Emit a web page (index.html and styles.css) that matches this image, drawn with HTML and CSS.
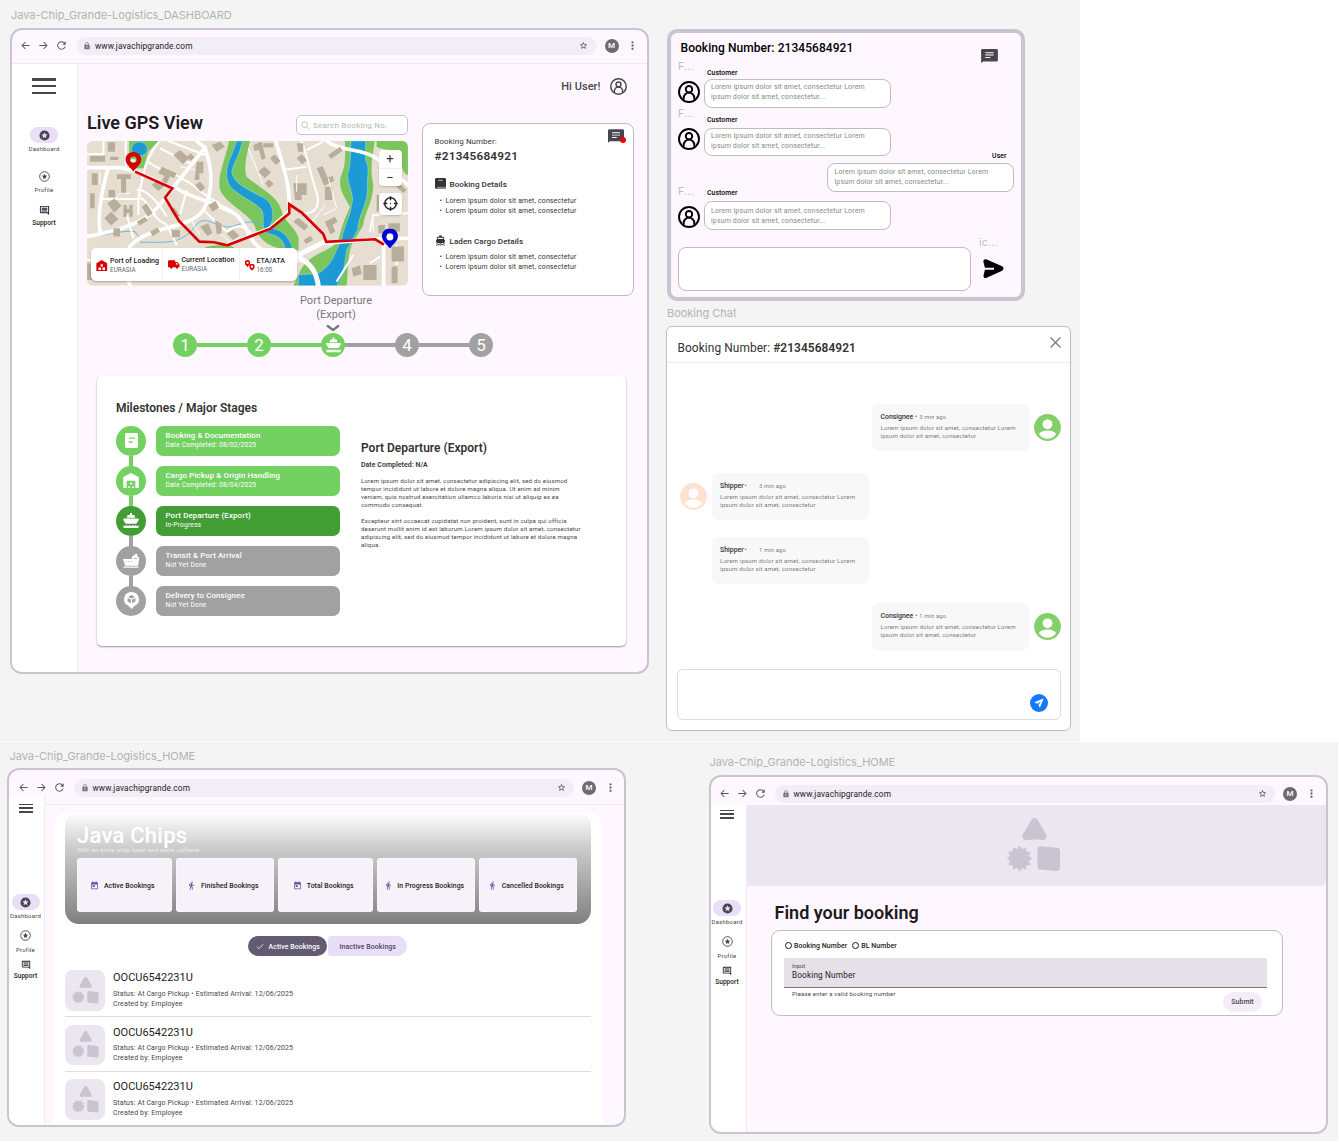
FILE: index.html
```html
<!DOCTYPE html>
<html lang="en">
<head>
<meta charset="utf-8">
<title>Java-Chip Grande Logistics</title>
<link rel="stylesheet" href="styles.css">
</head>
<body>
<svg class="defs" width="0" height="0" aria-hidden="true">
  <symbol id="back" viewBox="0 0 24 24"><path d="M21 11H6.800l5.600-5.600L11 4l-8 8 8 8 1.400-1.400L6.800 13H21z"/></symbol>
  <symbol id="fwd" viewBox="0 0 24 24"><path d="M3 11h14.200l-5.600-5.600L13 4l8 8-8 8-1.400-1.400 5.600-5.600H3z"/></symbol>
  <symbol id="reload" viewBox="0 0 24 24"><path d="M18.600 5.400A9.300 9.300 0 1 0 21 14h-2.100A7.200 7.200 0 1 1 17.100 6.900L13.800 10.200H21.200V2.800z"/></symbol>
  <symbol id="lock" viewBox="0 0 24 24"><path d="M18 8h-1V6A5 5 0 0 0 7 6v2H6a2 2 0 0 0-2 2v10a2 2 0 0 0 2 2h12a2 2 0 0 0 2-2V10a2 2 0 0 0-2-2zm-6 9a2 2 0 1 1 0-4 2 2 0 0 1 0 4zm3-9H9V6a3 3 0 0 1 6 0z"/></symbol>
  <symbol id="star" viewBox="0 0 24 24"><path d="M22 9.240l-7.190-.62L12 2 9.190 8.630 2 9.240l5.460 4.730L5.820 21 12 17.270 18.180 21l-1.630-7.030zM12 15.400l-3.760 2.270 1-4.280-3.320-2.880 4.380-.38L12 6.100l1.710 4.040 4.380.38-3.320 2.880 1 4.280z"/></symbol>
  <symbol id="dots" viewBox="0 0 24 24"><path d="M10 3h4v4h-4zM10 10h4v4h-4zM10 17h4v4h-4z"/></symbol>
  <symbol id="stars" viewBox="0 0 24 24"><path d="M12 1a11 11 0 1 0 0 22 11 11 0 0 0 0-22zm4.230 17L12 15.450 7.770 18l1.120-4.810-3.730-3.230 4.920-.42L12 5l1.920 4.530 4.920.42-3.730 3.230z"/></symbol>
  <symbol id="stars-o" viewBox="0 0 24 24"><circle cx="12" cy="12" r="10.500" fill="none" stroke="currentColor" stroke-width="2"/><path d="M15.800 17.500L12 15.200 8.200 17.500l1-4.300-3.300-2.900 4.400-.4L12 5.800l1.700 4.100 4.400.4-3.300 2.900z"/></symbol>
  <symbol id="comment" viewBox="0 0 24 24"><path d="M4 2a2 2 0 0 0-2 2v12c0 1.100.9 2 2 2h14l4 4V2zm0 2h16v13l-1.200-1H4zM6 12h12v2H6zM6 9h12v2H6zM6 6h12v2H6z"/></symbol>
  <symbol id="chat" viewBox="0 0 24 20"><path d="M2 0h20a2 2 0 0 1 2 2v14a2 2 0 0 1-2 2H3l-3 2V2a2 2 0 0 1 2-2z"/><path fill="#fff" d="M6 4.500h12v1.400H6zM6 8h12v1.400H6zM6 11.500h7v1.400H6z"/></symbol>
  <symbol id="person" viewBox="0 0 24 24"><g fill="none" stroke="currentColor" stroke-width="2.100"><circle cx="12" cy="12" r="10.900"/><circle cx="12" cy="9" r="3.500"/><path d="M6.200 20.500v-2a5.800 5.800 0 0 1 11.600 0v2"/></g></symbol>
  <symbol id="avatar" viewBox="0 0 27 27"><circle cx="13.500" cy="13.500" r="13.400"/><circle cx="13.500" cy="10.300" r="4.900" fill="#fff"/><path fill="#fff" d="M5 20.200c2-5 15-5 17 0-4 6-13 6-17 0z"/></symbol>
  <symbol id="boat" viewBox="0 0 24 24"><path d="M20 21c-1.390 0-2.780-.47-4-1.320-2.440 1.710-5.560 1.710-8 0C6.780 20.530 5.390 21 4 21H2v2h2c1.380 0 2.740-.35 4-.99 2.520 1.290 5.480 1.290 8 0 1.260.65 2.620.99 4 .99h2v-2zM3.950 19H4c1.600 0 3.020-.88 4-2 .98 1.120 2.400 2 4 2s3.020-.88 4-2c.98 1.120 2.400 2 4 2h.05l2.100-7.200L20 10.620V6a2 2 0 0 0-2-2h-3V1H9v3H6a2 2 0 0 0-2 2v4.620l-2.200 1.100zM6 6h12v2.500H6z"/></symbol>
  <symbol id="ferry" viewBox="0 0 16 16"><path d="M7 0h2v2h2.500l.8 3H3.700l.8-3H7zM1 5.800h14c1 0 1.300.8.800 1.600l-1.900 3.100c-.4.500-.8.700-1.400.7h-9c-.6 0-1-.2-1.400-.7L.2 7.400C-.3 6.600 0 5.800 1 5.800zM.3 12.500l1.500 1.300 1.500-1.300 1.600 1.300 1.500-1.300L8 13.800l1.600-1.300 1.500 1.300 1.600-1.300 1.500 1.300 1.500-1.300V15.600H.3z"/></symbol>
  <symbol id="doc" viewBox="0 0 14 16"><path d="M1.500 0h11A1.500 1.500 0 0 1 14 1.500v13a1.500 1.500 0 0 1-1.500 1.500h-11A1.500 1.500 0 0 1 0 14.500v-13A1.500 1.500 0 0 1 1.500 0zM4 4.700v1.400h6.500V4.700zM4 8.900v1.400h4.200V8.900z" fill-rule="evenodd"/></symbol>
  <symbol id="depot" viewBox="0 0 16 16"><path d="M8 0l8 4v12h-3.500V8h-9v8H0V4z"/><path d="M6.800 10h2.400v1.700H6.800zM5.200 13.800h1.700v1.700H5.200zM9.100 13.800h1.700v1.700H9.100z"/></symbol>
  <symbol id="cargo" viewBox="0 0 18 16"><path d="M0 6h10V3.500l2-1.300V1.500l3-1.500h1v3l2 1v2.500L17 13.500H2.500zM.5 14.500h17V16H.5z"/><path class="hole" d="M3 8.500h1.200v1H3zM6 8.500h1.200v1H6zM9 8.500h1.200v1H9zM12 5h4v.8h-4z"/></symbol>
  <symbol id="parcel" viewBox="0 0 16 18"><path d="M8 0a8 7.700 0 0 1 3 14.800L8 18l-3-3.200A8 7.700 0 0 1 8 0z"/><g class="hole"><path d="M8 3.200l3.600 1.900L8 7 4.400 5.100zM3.800 6.200L7.400 8v4l-3.600-2zM12.200 6.200L8.600 8v4l3.600-2z"/></g></symbol>
  <symbol id="pin" viewBox="0 0 16 20"><path fill-rule="evenodd" d="M8 0c4.800 0 8 3.500 8 7.700 0 4.600-4.800 7.800-8 12.300C4.800 15.500 0 12.300 0 7.700 0 3.500 3.200 0 8 0zm0 4.700a3.300 3.300 0 1 0 0 6.600 3.300 3.300 0 0 0 0-6.600z"/></symbol>
  <symbol id="walk" viewBox="0 0 24 24"><path d="M13.500 5.500a2 2 0 1 0 0-4 2 2 0 0 0 0 4zM9.800 8.900L7 23h2.100l1.800-8 2.100 2v6h2v-7.500l-2.100-2 .6-3A7.300 7.300 0 0 0 19 13v-2a5 5 0 0 1-4.300-2.400l-1-1.600c-.6-1-1.700-1.300-2.500-.8L6 8.300V13h2V9.600z"/></symbol>
  <symbol id="cal" viewBox="0 0 24 24"><path fill-rule="evenodd" d="M19 3h-1V1h-3v2H9V1H6v2H5a2 2 0 0 0-2 2v15a2 2 0 0 0 2 2h14a2 2 0 0 0 2-2V5a2 2 0 0 0-2-2zm0 17H5V9h14zM7 11h6v5H7z"/></symbol>
  <symbol id="shapes" viewBox="0 0 54 54"><path d="M24.500 1.600c1.500-2.200 4.500-2.200 6 0l8.500 15c1.600 3-.8 5.600-3.600 5.600-2.700-.9-13-.9-15.500 0-3.400.2-5.600-2.800-4-5.600z"/><path stroke="currentColor" stroke-width=".6" stroke-linejoin="round" transform="translate(12.500 40.500)" d="M12.500 0L9.080 2.430 10.800 6.250 6.650 6.650 6.250 10.800 2.430 9.080 0 12.500-2.430 9.080-6.250 10.800-6.650 6.650-10.800 6.250-9.080 2.430-12.500 0-9.080-2.430-10.800-6.250-6.650-6.650-6.250-10.800-2.430-9.080 0-12.500 2.430-9.080 6.250-10.800 6.650-6.650 10.800-6.250 9.080-2.430z"/><path d="M34 28.200l16 1.600c2 .2 3 1.300 3 3v17c0 2.400-1.400 3.500-3.300 3.300l-16.500-1.600c-1.900-.2-2.700-1.300-2.700-3.200V31.500c0-2.300 1.300-3.500 3.500-3.300z"/></symbol>
</svg>

<main class="canvas">
<div class="band band-top"></div>
<div class="band band-bottom"></div>

<!-- Dashboard -->
<section class="frame dash">
  <h2 class="frame-name">Java-Chip_Grande-Logistics_DASHBOARD</h2>
  <div class="window">
    <header class="toolbar"><svg class="ti"><use href="#back"/></svg><svg class="ti"><use href="#fwd"/></svg><svg class="ti"><use href="#reload"/></svg><div class="url"><svg><use href="#lock"/></svg><span>www.javachipgrande.com</span><svg class="fav"><use href="#star"/></svg></div><b class="me">M</b><svg class="ti"><use href="#dots"/></svg></header>
    <div class="body">
      <nav class="rail">
        <div class="burger"><i></i><i></i><i></i></div>
        <a class="item on"><span><svg><use href="#stars"/></svg></span>Dashboard</a>
        <a class="item"><span><svg><use href="#stars-o"/></svg></span>Profile</a>
        <a class="item sup"><span><svg><use href="#comment"/></svg></span>Support</a>
      </nav>
      <div class="page">
        <div class="hello"><span>Hi User!</span><svg><use href="#person"/></svg></div>
        <div class="top">
          <div class="gps">
            <div class="gps-head"><h1>Live GPS View</h1><div class="search"><svg viewBox="0 0 10 10"><circle cx="4" cy="4" r="3.200"/><path d="M6.300 6.300L9.500 9.500"/></svg><span>Search Booking No.</span></div></div>
            <div class="map">
              <svg class="terrain" viewBox="21 18 963 434">
                <rect x="21" y="18" width="963" height="434" fill="#e6dfd1"/>
                <g fill="#7bc65c">
                  <path d="M147 18H235L205 50 190 100 147 100z"/>
                  <path d="M447 18H510C500 60 490 100 500 125C545 165 590 180 604 225C612 260 650 280 656 310V345H620C580 340 535 320 525 275C510 235 440 210 420 165C410 120 438 70 447 18z"/>
                  <path d="M795 18H884C880 60 868 90 880 150C880 200 855 230 850 270L815 330C800 370 805 420 800 452H640L665 400C700 350 740 355 775 320C785 270 800 240 810 215C790 180 775 160 782 125C800 90 795 50 795 18z"/>
                  <path d="M890 18H984V120C960 115 970 75 955 55C930 40 905 45 890 35z"/>
                  <path d="M375 337C420 325 460 330 470 345H385z"/>
                </g>
                <g fill="#1b9ad6" stroke="#a8dcf0" stroke-width="1.500">
                  <ellipse cx="178" cy="42" rx="24" ry="21"/>
                  <path d="M470 18H487C480 60 462 80 455 110C460 145 500 160 530 178C555 190 578 200 578 235C580 260 570 270 567 280C600 280 625 300 638 340H615C610 300 570 300 553 290C545 260 555 245 545 225C530 205 490 190 455 160C430 130 440 90 455 60z"/>
                  <path d="M813 18H857V75C870 100 862 120 862 150C868 200 835 240 833 285L800 345C792 400 790 430 770 452H655V420C690 415 715 425 735 400C760 380 765 350 785 315C790 280 812 240 815 210C825 180 805 160 803 120C812 95 812 55 813 18z"/>
                </g>
                <path d="M21 305C90 300 130 285 165 290L175 305M180 322C240 320 280 330 320 300C350 280 345 255 380 257C420 270 440 285 470 270C500 260 530 255 545 275" fill="none" stroke="#69b8d8" stroke-width="3"/>
                <g fill="none" stroke="#fff" stroke-width="11" stroke-linecap="round" stroke-linejoin="round">
                  <path d="M21 98H120L165 108 275 158"/><path d="M84 100C70 150 50 230 60 290"/><path d="M21 305C100 290 200 270 250 195L375 38 350 18"/>
                  <path d="M375 38C400 110 400 170 370 225C330 280 240 270 180 310C140 330 120 370 150 452"/>
                  <path d="M290 160C350 200 420 200 470 240C510 280 505 330 560 350L650 380"/>
                  <path d="M588 18C600 70 630 140 628 210M628 230L570 280 440 330"/><path d="M735 320L655 360 620 400M660 370C700 390 710 420 715 452" stroke-width="15"/>
                  <path d="M740 18C780 50 850 40 890 70L940 110 984 150"/><path d="M740 325L890 312 984 310M911 325V452"/>
                </g>
                <g fill="none" stroke="#fff" stroke-width="6" stroke-linejoin="round">
                  <path d="M21 58H70V18M137 18V100M240 18C200 60 190 110 175 190C210 190 200 240 260 270M66 192H175V240M170 165C200 160 240 210 260 245M205 80C240 110 280 110 305 130M240 40L340 90M265 18L375 60M300 130C340 140 360 180 420 205M320 165L300 240M370 225L440 290C480 260 500 280 520 300M400 210L480 245M140 240L160 310M260 270L290 330M665 18C680 60 690 110 712 180C720 220 700 240 660 235M610 105L680 95M680 45L730 20M870 290L880 240 984 235M21 375H100M870 385L900 365M950 330V390M770 440L820 360"/>
                </g>
                <g fill="#b9ae9b">
                  <path d="M30 62h45v18H30zM90 65h25v10H90zM83 22h22v28H83zM35 115h18v35H35zM110 118h42v14h-14v45h-15v-45h-13zM85 165h20v22H85zM30 175h14v45H30zM82 205l22-15 20 22-22 22zM130 210h10v12h8v-12h10v35h-10v-12h-8v12h-10zM73 250l20-20 22 22-22 20zM100 280h20v25h-20z"/>
                  <path d="M185 215l15-10 18 30-15 10zM215 150l18-15 20 18-18 15zM170 260l25-15 8 12-25 15zM245 95l45 20-8 14-12-5-10 22-15-8 8-15-18-8zM280 60l20-15 28 25-20 18zM350 80h20v35h-12v20h-14zM320 65l12-10 12 12-12 10zM270 225l12-8 18 25-12 8zM345 150l15-10 16 18-15 12zM275 285h25v22h-25zM210 290l22-12 8 12-22 14z"/>
                  <path d="M395 30l25-10 15 15-25 15zM360 275l25-10 12 30-15 8zM385 210l22-12 10 20-20 12zM405 255l20 12v30h-15zM440 295l20-10 18 18-20 12z"/>
                  <path d="M520 30l25-10 12 50-12 5-8-30-15 3zM535 110l18-16 20 18-18 18zM555 145l12-12 14 14-14 12zM570 70l14-12 18 20-15 12zM550 25h30v12h-30zM640 145h40v35h-15v15h-20zM640 260l15-12 30 25-12 14zM670 315l22-12 8 12-22 12zM650 70l15-12 16 18-15 12zM710 100l18-7 15 35 15-6 5 15-30 15zM735 155h22v40h-22zM735 260l30-15 8 15-15 10 8 20-15 8zM745 60l35-25 8 12-35 25zM650 25h20v25h-15z"/>
                  <path d="M895 270h20v25h-20zM925 265h35v25h-35zM935 335h37v45h-37zM850 390h40v45h-40zM815 400l25-8 5 25-25 8zM935 395h18v50h-18zM890 180h15v50h-15zM960 145l20 20-10 10-20-18zM21 385h15v50H21z"/>
                </g>
                <g fill="none" stroke="#fff" stroke-width="3"><path d="M60 110V150M105 195L120 175H150M180 180L230 240M300 95L345 105M505 40L550 150M650 120V170M690 270L735 210M880 295V260M730 240L770 220 745 130M330 250L360 300M420 295L450 320"/></g>
                <path d="M165 110L277 160 255 188 297 258 358 320 402 322 442 331 572 281 628 235V208L665 233 730 297 739 321 886 313 912 329" fill="none" stroke="#d80000" stroke-width="8"/>
                <use href="#pin" x="135" y="51" width="50" height="59" fill="#d80000"/>
                <ellipse cx="159" cy="76" rx="8" ry="5" fill="#fff"/>
                <use href="#pin" x="905" y="281" width="50" height="60" fill="#0300d8"/>
                <circle cx="930" cy="307" r="10" fill="#fff"/>
              </svg>
              <div class="zoomer"><span>+</span><span>−</span></div>
              <div class="locate"><svg viewBox="0 0 16 16"><circle cx="8" cy="8" r="6.200"/><path d="M8 .3V4.500M8 11.500V15.700M.3 8H4.500M11.500 8H15.700M7.500 8h1"/></svg></div>
              <div class="legend">
                <div><svg viewBox="0 0 16 16"><path fill-rule="evenodd" d="M8 0l7.500 4.500V16H.5V4.500zM6.500 6v3h3V6zM3.500 10.500v3.500H7v-3.500zm5.500 0v3.500h3.500v-3.500z"/></svg><p><b>Port of Loading</b>EURASIA</p></div>
                <div><svg viewBox="0 0 16 16"><path fill-rule="evenodd" d="M1 3h9v2.500h3L16 9v4h-1.500a2 2 0 0 1-4 0h-4a2 2 0 0 1-4 0H0V4zM11 7v2h3.200L12.500 7z"/></svg><p><b>Current Location</b>EURASIA</p></div>
                <div><svg viewBox="0 0 16 18"><use href="#pin" width="9" height="11"/><use href="#pin" x="7" y="6" width="9" height="11"/></svg><p><b>ETA/ATA</b>16:00</p></div>
              </div>
            </div>
          </div>
          <aside class="booking">
            <div class="unread"><svg><use href="#chat"/></svg><i></i></div>
            <p class="bn">Booking Number:</p>
            <p class="num">#21345684921</p>
            <h3><svg viewBox="0 0 12 12"><path d="M1.500 0h9A1.500 1.500 0 0 1 12 1.500V12H1.800A1.800 1.800 0 0 1 0 10.200V1.500A1.500 1.500 0 0 1 1.500 0z"/><path fill="#888" d="M2 9.500h10V12H2z"/><path fill="#999" d="M3.500 2h5v1.400h-5z"/></svg>Booking Details</h3>
            <ul><li>Lorem ipsum dolor sit amet, consectetur</li><li>Lorem ipsum dolor sit amet, consectetur</li></ul>
            <h3 class="laden"><svg><use href="#boat"/></svg>Laden Cargo Details</h3>
            <ul><li>Lorem ipsum dolor sit amet, consectetur</li><li>Lorem ipsum dolor sit amet, consectetur</li></ul>
          </aside>
        </div>
        <div class="progress">
          <p>Port Departure<br>(Export)</p>
          <svg class="chev" viewBox="0 0 14 8"><path d="M1 1.500L7 6l6-4.500"/></svg>
          <div class="steps"><b>1</b><i></i><b>2</b><i></i><b><svg><use href="#ferry"/></svg></b><i class="off"></i><b class="off">4</b><i class="off"></i><b class="off">5</b></div>
        </div>
        <div class="card">
          <div class="stages">
            <h3>Milestones / Major Stages</h3>
            <div class="stage-grid">
              <div class="line"><b><svg class="i-doc"><use href="#doc"/></svg></b><i></i><b><svg><use href="#depot"/></svg></b><i></i><b class="now"><svg><use href="#ferry"/></svg></b><i class="off"></i><b class="off"><svg><use href="#cargo"/></svg></b><i class="off"></i><b class="off"><svg class="i-parcel"><use href="#parcel"/></svg></b></div>
              <div class="boxes">
                <div><b>Booking &amp; Documentation</b>Date Completed: 08/02/2025</div>
                <div><b>Cargo Pickup &amp; Origin Handling</b>Date Completed: 08/04/2025</div>
                <div class="now"><b>Port Departure (Export)</b>In-Progress</div>
                <div class="off"><b>Transit &amp; Port Arrival</b>Not Yet Done</div>
                <div class="off"><b>Delivery to Consignee</b>Not Yet Done</div>
              </div>
            </div>
          </div>
          <div class="detail">
            <h3>Port Departure (Export)</h3>
            <h4>Date Completed: N/A</h4>
            <p>Lorem ipsum dolor sit amet, consectetur adipiscing elit, sed do eiusmod<br>tempor incididunt ut labore et dolore magna aliqua. Ut enim ad minim<br>veniam, quis nostrud exercitation ullamco laboris nisi ut aliquip ex ea<br>commodo consequat.</p>
            <p>Excepteur sint occaecat cupidatat non proident, sunt in culpa qui officia<br>deserunt mollit anim id est laborum.Lorem ipsum dolor sit amet, consectetur<br>adipiscing elit, sed do eiusmod tempor incididunt ut labore et dolore magna<br>aliqua.</p>
          </div>
        </div>
      </div>
    </div>
  </div>
</section>

<!-- Support chat -->
<section class="frame support">
  <div class="sup-head"><h2>Booking Number: 21345684921</h2><svg><use href="#chat"/></svg></div>
  <div class="msg m1"><div class="who"><span>F...</span><svg><use href="#person"/></svg></div><div class="say"><b>Customer</b><p>Lorem ipsum dolor sit amet, consectetur Lorem<br>ipsum dolor sit amet, consectetur...</p></div></div>
  <div class="msg m2"><div class="who"><span>F...</span><svg><use href="#person"/></svg></div><div class="say"><b>Customer</b><p>Lorem ipsum dolor sit amet, consectetur Lorem<br>ipsum dolor sit amet, consectetur...</p></div></div>
  <div class="msg mine"><div class="say"><b>User</b><p>Lorem ipsum dolor sit amet, consectetur Lorem<br>ipsum dolor sit amet, consectetur...</p></div></div>
  <div class="msg m3"><div class="who"><span>F...</span><svg><use href="#person"/></svg></div><div class="say"><b>Customer</b><p>Lorem ipsum dolor sit amet, consectetur Lorem<br>ipsum dolor sit amet, consectetur...</p></div></div>
  <div class="compose"><div class="field"></div><div class="send"><span>ic...</span><svg viewBox="0 0 22 20"><path d="M3.300.4L19.500 7.500c2.600 1.200 2.600 3.800 0 5L3.800 19.700C1.800 20.600.2 19.200.6 17.200L2 11.200h9.500V9.300H2L.5 3.200C0 1.200 1.500-.3 3.300.4z"/></svg></div></div>
</section>

<!-- Booking chat -->
<section class="frame chatbox">
  <h2 class="frame-name">Booking Chat</h2>
  <div class="chat-window">
    <header><h2>Booking Number: <b>#21345684921</b></h2><svg viewBox="0 0 10 10"><path d="M.5.5l9 9M9.500.5l-9 9"/></svg></header>
    <div class="cm right c1"><div><p class="by"><b>Consignee</b> <em>•</em> 3 min ago</p><p>Lorem ipsum dolor sit amet, consectetur Lorem<br>ipsum dolor sit amet, consectetur</p></div><svg><use href="#avatar"/></svg></div>
    <div class="cm c2"><svg><use href="#avatar"/></svg><div><p class="by"><b>Shipper</b><em class="dot">•</em>3 min ago</p><p>Lorem ipsum dolor sit amet, consectetur Lorem<br>ipsum dolor sit amet, consectetur</p></div></div>
    <div class="cm c3"><div><p class="by"><b>Shipper</b><em class="dot">•</em>1 min ago</p><p>Lorem ipsum dolor sit amet, consectetur Lorem<br>ipsum dolor sit amet, consectetur</p></div></div>
    <div class="cm right c4"><div><p class="by"><b>Consignee</b> <em>•</em> 1 min ago</p><p>Lorem ipsum dolor sit amet, consectetur Lorem<br>ipsum dolor sit amet, consectetur</p></div><svg><use href="#avatar"/></svg></div>
    <div class="reply"><svg viewBox="0 0 18 18"><circle cx="9" cy="9" r="9" fill="#1677ff"/><path fill="#fff" d="M13.600 4.500L4.300 8.300l3 1.500 3.700-2.600-2.600 3.700 1.500 2.900z"/></svg></div>
  </div>
</section>

<!-- Booking list -->
<section class="frame home">
  <h2 class="frame-name">Java-Chip_Grande-Logistics_HOME</h2>
  <div class="window">
    <header class="toolbar"><svg class="ti"><use href="#back"/></svg><svg class="ti"><use href="#fwd"/></svg><svg class="ti"><use href="#reload"/></svg><div class="url"><svg><use href="#lock"/></svg><span>www.javachipgrande.com</span><svg class="fav"><use href="#star"/></svg></div><b class="me">M</b><svg class="ti"><use href="#dots"/></svg></header>
    <div class="body">
      <nav class="rail slim">
        <div class="burger"><i></i><i></i><i></i></div>
        <a class="item on"><span><svg><use href="#stars"/></svg></span>Dashboard</a>
        <a class="item"><span><svg><use href="#stars-o"/></svg></span>Profile</a>
        <a class="item sup"><span><svg><use href="#comment"/></svg></span>Support</a>
      </nav>
      <div class="panel">
        <div class="hero">
          <h1>Java Chips</h1>
          <p>With an extra whip foam and extra caffeine</p>
          <div class="tiles">
            <div><svg><use href="#cal"/></svg>Active Bookings</div>
            <div><svg><use href="#walk"/></svg>Finished Bookings</div>
            <div><svg><use href="#cal"/></svg>Total Bookings</div>
            <div><svg><use href="#walk"/></svg>In Progress Bookings</div>
            <div><svg><use href="#walk"/></svg>Cancelled Bookings</div>
          </div>
        </div>
        <div class="tabs"><span class="sel"><svg viewBox="0 0 10 8"><path d="M1 4.200l2.500 2.500L9 1.200"/></svg>Active Bookings</span><span>Inactive Bookings</span></div>
        <ul class="list">
          <li><div class="thumb"><svg><use href="#shapes"/></svg></div><div><h3>OOCU6542231U</h3><p>Status: At Cargo Pickup • Estimated Arrival: 12/06/2025<br>Created by: Employee</p></div></li>
          <li><div class="thumb"><svg><use href="#shapes"/></svg></div><div><h3>OOCU6542231U</h3><p>Status: At Cargo Pickup • Estimated Arrival: 12/06/2025<br>Created by: Employee</p></div></li>
          <li><div class="thumb"><svg><use href="#shapes"/></svg></div><div><h3>OOCU6542231U</h3><p>Status: At Cargo Pickup • Estimated Arrival: 12/06/2025<br>Created by: Employee</p></div></li>
        </ul>
      </div>
    </div>
  </div>
</section>

<!-- Find a booking -->
<section class="frame find">
  <h2 class="frame-name">Java-Chip_Grande-Logistics_HOME</h2>
  <div class="window">
    <header class="toolbar"><svg class="ti"><use href="#back"/></svg><svg class="ti"><use href="#fwd"/></svg><svg class="ti"><use href="#reload"/></svg><div class="url"><svg><use href="#lock"/></svg><span>www.javachipgrande.com</span><svg class="fav"><use href="#star"/></svg></div><b class="me">M</b><svg class="ti"><use href="#dots"/></svg></header>
    <div class="body">
      <nav class="rail slim">
        <div class="burger"><i></i><i></i><i></i></div>
        <a class="item on"><span><svg><use href="#stars"/></svg></span>Dashboard</a>
        <a class="item"><span><svg><use href="#stars-o"/></svg></span>Profile</a>
        <a class="item sup"><span><svg><use href="#comment"/></svg></span>Support</a>
      </nav>
      <div class="finder">
        <div class="banner"><svg><use href="#shapes"/></svg></div>
        <h1>Find your booking</h1>
        <div class="form">
          <div class="radios"><i></i><span>Booking Number</span><i></i><span>BL Number</span></div>
          <div class="input"><small>Input</small><span>Booking Number</span></div>
          <div class="foot"><p>Please enter a valid booking number</p><span class="submit">Submit</span></div>
        </div>
      </div>
    </div>
  </div>
</section>
</main>
</body>
</html>
```
FILE: styles.css
```css
* { box-sizing: border-box; margin: 0; padding: 0; }
body { background: #fff; font-family: Roboto, sans-serif; color: #1d1b20; }
h1, h2, h3, h4, b { font-weight: 500; }
ul { list-style: none; }
svg { fill: currentColor; flex: none; display: block; }
i { font-style: normal; display: block; }
.defs { position: absolute; }
p, h1, h2, h3, h4, span, b { white-space: nowrap; }

/* canvas and frames */
.canvas { position: relative; width: 1339px; height: 1142px; overflow: hidden; }
.band { background: #f4f4f4; }
.band-top { width: 1080px; height: 741px; }
.band-bottom { width: 1338px; height: 399px; margin-top: 1px; }
.frame { position: absolute; }
.frame-name { font: 400 11px/14px Inter, sans-serif; color: #b3b3b3; height: 20px; padding-left: 1px; letter-spacing: -.02px; }
.dash { left: 10px; top: 8px; width: 639px; }
.home { left: 7px; top: 749px; width: 619px; }
.find { left: 708.500px; top: 755px; width: 619px; }
.window { border: 2px solid #cac4d0; border-radius: 12px; background: #fef7ff; overflow: hidden; display: flex; flex-direction: column; }
.dash .window { height: 646px; }
.home .window, .find .window { height: 359px; }
.home .frame-name { height: 19px; padding-left: 2.500px; }

/* browser toolbar */
.toolbar { display: flex; align-items: center; height: 34px; flex: none; padding: 0 9px 2px 8px; border-bottom: 1px solid #efe8f2; color: #5b5761; }
.ti { width: 11px; height: 11px; margin-right: 7px; }
.ti:last-child { margin-right: 0; }
.url { flex: 1; height: 18px; margin-left: 2px; border-radius: 9px; background: #f3edf7; display: flex; align-items: center; padding: 0 8.500px 0 7px; font-size: 8.300px; letter-spacing: .12px; color: #1d1b20; }
.url svg { width: 8px; height: 8px; color: #79747e; margin-right: 4px; }
.url .fav { width: 9px; height: 9px; margin: 0 0 0 auto; color: #49454f; }
.me { width: 14px; height: 14px; border-radius: 7px; background: #6f6a72; color: #fff; font-size: 8px; line-height: 14px; text-align: center; margin: 0 8.500px 0 8px; }
.home .toolbar { padding: 1px 8.500px 0 8.500px; height: 35px; }
.body { flex: 1; display: flex; min-height: 0; }

/* navigation rail */
.rail { width: 66px; background: #fff; border-right: 1px solid #f1eaf4; display: flex; flex-direction: column; align-items: center; padding: 14px 1px 0 0; flex: none; color: #49454f; }
.burger { width: 24px; height: 16px; display: flex; flex-direction: column; justify-content: space-between; margin-bottom: 33px; }
.burger i { height: 2.500px; background: #49454f; }
.item { display: flex; flex-direction: column; align-items: center; font-size: 6px; line-height: 8px; letter-spacing: .22px; height: 41px; }
.item span { width: 28px; height: 16px; border-radius: 8px; display: flex; align-items: center; justify-content: center; margin-bottom: 2px; }
.item.on span { background: #e8def8; }
.item svg { width: 11px; height: 11px; }
.item.sup { color: #1d1b20; font-weight: 500; font-size: 6.500px; letter-spacing: .05px; margin-top: -6.500px; }
.item.sup span { margin-bottom: 0; }
.slim { width: 36px; padding: 7.500px 2px 0 0; margin-top: -9px; position: relative; }
.slim .burger { width: 14px; height: 9px; margin-bottom: 81.500px; }
.slim .burger i { height: 1.500px; }
.slim .item { height: 33.500px; }
.slim .item.sup { margin-top: -3px; }
.slim .item.sup svg { width: 10px; height: 10px; }
.slim .item.sup span { height: 14px; }

/* dashboard */
.page { flex: 1; min-width: 0; }
.hello { height: 44px; display: flex; justify-content: flex-end; align-items: center; padding-right: 20px; gap: 9.500px; font-size: 11px; font-weight: 500; color: #49454f; letter-spacing: .05px; }
.hello svg { width: 17px; height: 17px; }
.top { display: flex; padding-left: 9px; height: 185.500px; }
.gps { width: 321px; }
.gps-head { height: 33px; padding-top: 7px; display: flex; justify-content: space-between; }
.gps-head h1 { font-size: 18px; line-height: 16px; font-weight: 600; }
.search { width: 112px; height: 20px; border: 1px solid #c4c4c4; border-radius: 5px; background: #fff; display: flex; align-items: center; padding-left: 4px; gap: 3px; font-size: 8px; color: #b5b5b5; letter-spacing: .25px; }
.search svg { width: 9px; height: 9px; fill: none; stroke: #aaa; stroke-width: .8; }
.map { position: relative; height: 144.600px; border-radius: 6px; overflow: hidden; }
.terrain { width: 321px; height: 144.600px; }
.zoomer, .locate { position: absolute; left: 291.500px; width: 23px; background: #fff; border-radius: 4px; box-shadow: 0 1px 2px #0003; }
.zoomer { top: 8.500px; height: 36px; font-size: 13px; line-height: 17px; text-align: center; color: #333; }
.zoomer span { display: block; height: 18px; }
.zoomer span + span { border-top: 1px solid #f3edf7; }
.locate { top: 51.500px; height: 22px; padding: 3.500px 4px; }
.locate svg { width: 15px; height: 15px; fill: none; stroke: #222; stroke-width: 1.500; }
.legend { position: absolute; left: 4px; top: 107px; width: 206px; height: 33px; border-radius: 5px; background: #fff; box-shadow: 0 1px 2px #0004; display: flex; font-size: 6.300px; line-height: 8px; color: #666; letter-spacing: .05px; }
.legend > div { display: flex; align-items: center; gap: 2.500px; padding: 2px 0 0 5px; border-right: 1px solid #f1f1f1; width: 72px; }
.legend > div + div { width: 77px; padding: 0 0 1px 5px; gap: 2px; }
.legend > div:last-child { width: 57px; border: 0; padding: 2px 0 0 4px; gap: 1px; }
.legend svg { width: 11.500px; height: 11.500px; color: #d80000; }
.legend b { display: block; font-size: 7px; line-height: 9px; color: #1d1b20; letter-spacing: .04px; }
.booking { position: relative; margin: 14.500px 0 0 14px; width: 212px; height: 173px; border: 1.500px solid #bdbdbd; border-radius: 8px; background: #fff; padding: 12px 0 0 11.500px; color: #333; }
.unread { position: absolute; left: 185px; top: 5px; color: #49454f; }
.unread svg { width: 16px; height: 14px; }
.unread i { position: absolute; left: 12px; top: 8.500px; width: 6px; height: 6px; border-radius: 3px; background: #f00000; }
.bn { font-size: 7.900px; line-height: 12px; letter-spacing: .1px; }
.num { font-size: 11.800px; line-height: 17px; font-weight: 600; letter-spacing: .2px; }
.booking h3 { display: flex; align-items: center; gap: 4px; font-size: 8.100px; line-height: 12px; margin-top: 13px; height: 12px; letter-spacing: .05px; }
.booking h3 svg { width: 11px; height: 11px; }
.booking h3.laden { margin-top: 19px; }
.booking ul { padding: 6px 0 0 5px; font-size: 6.900px; line-height: 10px; letter-spacing: .18px; }
.booking .laden + ul { padding-top: 5px; }
.booking li::before { content: "•"; margin-right: 3.500px; font-size: 7px; }
.progress { display: flex; flex-direction: column; align-items: center; width: 510px; color: #777; }
.progress p { font-size: 11px; line-height: 14px; text-align: center; padding-left: 6px; letter-spacing: .02px; }
.chev { width: 14px; height: 8px; margin: 2px 0 1.500px; fill: none; stroke: #777; stroke-width: 2.200; }
.steps { display: flex; align-items: center; }
.steps b { width: 24px; height: 24px; border-radius: 12px; background: #72d160; color: #fff; font-size: 17px; font-weight: 400; line-height: 24px; text-align: center; display: flex; justify-content: center; align-items: center; }
.steps i { width: 50px; height: 4px; background: #72d160; }
.steps svg { width: 15px; height: 16px; }
.steps .off, .line .off, .boxes .off { background: #a1a1a1; }
.card { width: 529px; height: 270.500px; margin: 18.500px 0 0 18.500px; border-radius: 5px; background: #fff; box-shadow: 0 1px 2px #0006; display: flex; padding: 24px 0 0 19.500px; color: #333; }
.card h3 { font-size: 12px; line-height: 16px; font-weight: 600; }
.stages { width: 245px; }
.stage-grid { display: flex; gap: 10px; padding-top: 10px; }
.line { display: flex; flex-direction: column; align-items: center; }
.line b { width: 30px; height: 30px; border-radius: 15px; background: #72d160; color: #fff; display: flex; align-items: center; justify-content: center; }
.line i { width: 4.500px; height: 10px; background: #72d160; }
.line svg { width: 16px; height: 15.500px; }
.line .i-doc { width: 13px; height: 15px; }
.line .i-parcel { width: 15px; height: 17px; }
.line .now, .boxes .now { background: #439d35; }
.hole { fill: #a1a1a1; }
.boxes { display: flex; flex-direction: column; gap: 10px; }
.boxes div { width: 184px; height: 30px; border-radius: 7px; background: #72d160; color: #fff; padding: 4.500px 0 0 9.500px; font-size: 6.600px; line-height: 9px; letter-spacing: .2px; }
.boxes b { display: block; font-size: 7.900px; line-height: 11px; letter-spacing: .13px; }
.detail { padding-top: 40px; }
.detail h4 { font-size: 6.900px; font-weight: 600; line-height: 9px; margin: 5px 0 7.500px; letter-spacing: .08px; }
.detail p { font-size: 6.100px; line-height: 8px; margin-bottom: 8px; letter-spacing: .17px; color: #49454f; }

/* support chat */
.support { left: 667px; top: 29px; width: 357.500px; height: 272px; border: 4px solid #cac4d0; border-radius: 10px; background: #fef7ff; padding: 0 7px; }
.sup-head { display: flex; justify-content: space-between; height: 27px; padding: 6.500px 15.500px 0 2.500px; color: #000; }
.sup-head h2 { font-size: 12px; line-height: 17px; letter-spacing: .06px; }
.sup-head svg { width: 17px; height: 14px; margin-top: 9px; color: #49454f; }
.msg { display: flex; gap: 5px; color: #000; height: 47px; }
.who { width: 21px; }
.who span, .send span { font: 400 10.500px/13px Inter, sans-serif; color: #c0bcc3; display: block; height: 20.500px; letter-spacing: .3px; }
.who svg { width: 22px; height: 22px; }
.say { padding-top: 9px; }
.say b { display: block; font-size: 6.800px; line-height: 9px; padding-left: 3px; letter-spacing: .1px; }
.say p { width: 187px; height: 28.500px; margin-top: 1px; border: 1.500px solid #bdbdbd; border-radius: 8px; background: #fff; font-size: 7px; line-height: 10px; letter-spacing: .14px; color: #8a878c; padding: 2px 0 0 6px; }
.m2 p { margin-top: 2.500px; padding-top: 2.500px; }
.mine { height: 31px; margin-top: -2px; justify-content: flex-end; }
.mine .say { padding-top: 0; }
.mine b { text-align: right; padding-right: 7px; }
.mine p { margin-top: 2px; padding: 3px 0 0 7px; }
.m3 { margin-top: 2px; }
.m3 .say { padding-top: 4px; }
.m3 p { margin-top: 3px; padding-top: 3.500px; }
.compose { display: flex; padding-top: 2px; }
.field { width: 293px; height: 44px; border: 1.500px solid #bdbdbd; border-radius: 8px; background: #fff; margin-top: 12.500px; }
.send { padding: 2px 0 0 8px; }
.send span { height: 21.500px; }
.send svg { width: 21px; height: 21px; color: #000; margin-left: 3.500px; }

/* booking chat */
.chatbox { left: 666px; top: 306px; width: 405px; }
.chat-window { height: 405px; border: 1.500px solid #c2bcc8; border-radius: 6px; background: #fff; }
.chat-window header { display: flex; justify-content: space-between; height: 36px; border-bottom: 1px solid #ececec; padding: 10px 9px 0 10.500px; color: #333; }
.chat-window h2 { font-size: 11.900px; font-weight: 400; line-height: 23px; letter-spacing: .08px; }
.chat-window h2 b { font-weight: 600; }
.chat-window header svg { width: 11px; height: 11px; stroke: #777; stroke-width: 1.100; fill: none; }
.cm { display: flex; align-items: center; gap: 5px; padding: 0 9px 0 12.500px; height: 47.500px; color: #84cf69; }
.cm > svg { width: 27px; height: 27px; margin-top: 1px; }
.cm > div { width: 157px; height: 47.500px; border-radius: 6px; background: #f8f8f8; padding: 9.500px 0 0 8.500px; font-size: 6.100px; line-height: 8px; color: #7d7d7d; letter-spacing: .15px; }
.cm .by { line-height: 9px; margin-bottom: 1.500px; font-size: 5.800px; }
.cm .by b { font-size: 6.900px; color: #333; letter-spacing: 0; }
.cm em { font-style: normal; font-size: 8px; line-height: 6px; }
.cm .dot { margin: 0 12px 0 .5px; }
.right { justify-content: flex-end; }
.c1 { margin-top: 40.500px; }
.c2 { margin-top: 21.500px; color: #fde2d0; }
.c3 { margin-top: 16.500px; padding-left: 44.500px; }
.c4 { margin-top: 18.500px; }
.reply { width: 384px; height: 51.500px; border: 1px solid #dcdcdf; border-radius: 6px; margin: 18.500px 0 0 9.500px; display: flex; justify-content: flex-end; padding: 24px 11.500px 0 0; }
.reply svg { width: 18px; height: 18px; }

/* booking list */
.panel { width: 549.500px; margin: 7px 0 0 8px; border-radius: 16px 16px 0 0; background: #fff; padding: 0 12px; }
.hero { height: 112px; border-radius: 14px; background: linear-gradient(#fff 0%, #ccc 32%, #7f7f7f 100%); padding: 11.500px 12px 0; color: #fff; }
.hero h1 { font-size: 22px; line-height: 23px; letter-spacing: .25px; }
.hero p { font-size: 6.200px; line-height: 7px; letter-spacing: .12px; height: 11.500px; color: #ececec; }
.tiles { display: flex; gap: 4px; }
.tiles div { width: 95px; height: 54px; border-radius: 3px; background: #f7f2fa; border: 1px solid #fff6; display: flex; align-items: center; justify-content: center; gap: 4.500px; font-size: 6.900px; font-weight: 500; color: #1d1b20; letter-spacing: .06px; white-space: nowrap; padding: 1px 4px 0 0; }
.tiles div:nth-child(even), .tiles div:last-child { width: 98px; }
.tiles svg { width: 9px; height: 9px; color: #6750a4; }
.tabs { display: flex; gap: 1px; justify-content: center; padding: 12px 0 0; height: 46px; }
.tabs span { width: 79px; height: 20px; border-radius: 3px 10px 10px 3px; background: #e8def8; color: #4a4458; font-size: 6.900px; font-weight: 500; line-height: 20px; letter-spacing: .1px; display: flex; justify-content: center; align-items: center; padding-top: 1px; }
.tabs .sel { border-radius: 10px; background: #625b71; color: #fff; gap: 5px; }
.tabs svg { width: 8px; height: 7px; fill: none; stroke: #fff; stroke-width: 1; }
.list li { display: flex; gap: 8px; height: 54.700px; }
.list li > div:last-child { padding-top: 1px; }
.thumb { width: 40px; height: 40.500px; border-radius: 8px; background: #ebe6f0; display: flex; align-items: center; justify-content: center; color: #cac4d0; }
.thumb svg { width: 27px; height: 27px; }
.list li:not(:last-child) { background: linear-gradient(#dedede, #dedede) 0 46px / 100% 1px no-repeat; }
.list h3 { font-size: 11px; font-weight: 400; line-height: 14px; }
.list p { font-size: 7px; line-height: 10px; margin-top: 3.500px; letter-spacing: .13px; color: #49454f; }

/* find a booking */
.find .toolbar { height: 28px; border: 0; padding-top: 5px; padding-bottom: 0; }
.find .rail { margin-top: -1.500px; padding-top: 6px; }
.finder { flex: 1; min-width: 0; }
.banner { height: 81px; background: #ebe6f0; border-radius: 0 0 6px 0; display: flex; justify-content: center; color: #cac4d0; padding: 13px 4px 0 0; }
.banner svg { width: 54px; height: 54px; }
.finder h1 { font-size: 18px; line-height: 20px; margin: 16.500px 0 7.500px 28px; font-weight: 600; }
.form { width: 512px; height: 86px; margin-left: 24.500px; border: 1.500px solid #bdbdbd; border-radius: 9px; background: #fff; padding: 10px 15px 0 12px; }
.radios { display: flex; align-items: center; height: 9px; font-size: 7px; font-weight: 500; }
.radios i { width: 7px; height: 7px; border: 1px solid #1d1b20; border-radius: 4px; margin: 0 2px 0 1px; }
.radios span { margin-right: 4px; letter-spacing: .05px; }
.input { height: 30px; margin-top: 8px; background: #e6e0e9; border-bottom: 1px solid #79747e; border-radius: 2px 2px 0 0; padding: 4px 0 0 8px; display: flex; flex-direction: column; }
.input small { font-size: 5.800px; line-height: 8px; color: #49454f; }
.input span { font-size: 8.200px; line-height: 11.500px; letter-spacing: .17px; }
.foot { display: flex; justify-content: space-between; padding: 2px 5px 0 8px; }
.foot p { font-size: 6px; line-height: 8px; letter-spacing: .2px; color: #49454f; }
.submit { width: 39px; height: 20px; margin-top: 2px; border-radius: 10px; background: #f3edf7; font-size: 7px; font-weight: 500; line-height: 20px; text-align: center; color: #49454f; }
```
